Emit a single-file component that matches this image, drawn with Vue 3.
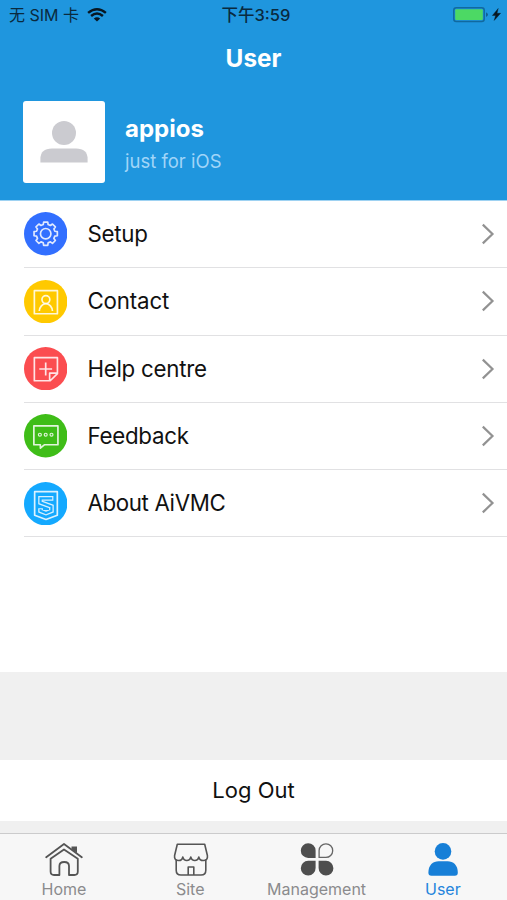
<script setup>
const items = [
  { id: 'setup', label: 'Setup', color: '#326fff' },
  { id: 'contact', label: 'Contact', color: '#ffc900' },
  { id: 'help', label: 'Help centre', color: '#fb4d50' },
  { id: 'feedback', label: 'Feedback', color: '#3fbd18' },
  { id: 'about', label: 'About AiVMC', color: '#14a9ff' },
]
const tabs = [
  { id: 'home', label: 'Home' },
  { id: 'site', label: 'Site' },
  { id: 'management', label: 'Management' },
  { id: 'user', label: 'User' },
]

// Outline of an eight-toothed gear centred at (22, 22)
const gear = (() => {
  const pts = []
  for (let i = 0; i < 8; i++) {
    for (const [offset, r] of [[-15, 9.6], [-10, 12], [10, 12], [15, 9.6]]) {
      const a = ((i * 45 + offset - 90) * Math.PI) / 180
      pts.push(`${(22 + r * Math.cos(a)).toFixed(2)} ${(22 + r * Math.sin(a)).toFixed(2)}`)
    }
  }
  return `M${pts.join('L')}Z`
})()
</script>

<template>
  <div class="screen">
    <header class="header">
      <div class="status">
        <div class="carrier">
          <span class="carrier-name">无 SIM 卡</span>
          <svg class="wifi" width="20" height="14" viewBox="0 0 20 14">
            <path d="M1.1 4.9Q10-2.3 18.9 4.9" />
            <path d="M4.1 8Q10 3 15.9 8" />
            <path class="dot" d="M6.8 10.4Q10 7.9 13.2 10.4L10 13.6Z" />
          </svg>
        </div>
        <span class="time">下午3:59</span>
        <svg class="battery" width="50" height="16" viewBox="0 0 50 16">
          <rect x=".8" y=".8" width="30.4" height="13.6" rx="2.5" fill="none" stroke="#11699f" stroke-width="1.5" />
          <rect x="2.2" y="2.2" width="27.6" height="10.8" rx="1" fill="#4cd964" />
          <path d="M33.2 5.2Q36.5 7.6 33.2 10Z" fill="#12547d" />
          <path d="M45.2 1.5L39.4 8.5H42.6L41.2 13.4L47.6 6.3H44Z" fill="#081722" stroke="#081722" stroke-width=".4" />
        </svg>
      </div>
      <h1 class="title">User</h1>
      <div class="profile">
        <div class="avatar">
          <svg width="48" height="42" viewBox="0 0 48 42" fill="#cbcbd0">
            <circle cx="24" cy="12" r="12" />
            <path d="M.4 41.5V38Q.4 27.5 12 27.5H36Q47.6 27.5 47.6 38V41.5Z" />
          </svg>
        </div>
        <div class="identity">
          <div class="name">appios</div>
          <div class="bio">just for iOS</div>
        </div>
      </div>
    </header>

    <main class="list">
      <div v-for="item in items" :key="item.id" class="row">
        <svg class="badge" viewBox="0 0 44 44">
          <circle cx="22" cy="22" r="22" :fill="item.color" />
          <g v-if="item.id === 'setup'" class="glyph">
            <path :d="gear" />
            <circle cx="22" cy="22" r="5.3" />
          </g>
          <g v-else-if="item.id === 'contact'" class="glyph">
            <rect x="10.5" y="10.8" width="23.4" height="23.4" />
            <circle cx="22.2" cy="19.8" r="4" />
            <path d="M15.5 31.4C15.9 27.5 18.5 24 22.2 24S28.5 27.5 28.9 31.4" />
          </g>
          <g v-else-if="item.id === 'help'" class="glyph">
            <path d="M33.9 26.5V10.8H10.5V34.2H26.6L33.9 27V26.5H26V34.2M22 15.8V28.8M15.5 22.3H28.5" />
          </g>
          <g v-else-if="item.id === 'feedback'" class="glyph">
            <path d="M10 12H34.4V31.2H20.6L16.6 34.6V31.2H10Z" />
            <circle class="small" cx="16.1" cy="21" r="1.5" />
            <circle class="small" cx="22" cy="21" r="1.5" />
            <circle class="small" cx="27.9" cy="21" r="1.5" />
          </g>
          <g v-else class="glyph">
            <path d="M10.8 9.8H33.8V33.8L22.3 38L10.8 33.8Z" />
            <path class="ribbon" d="M29.8 16.6H16.8V20.8L27.8 24.8V29.2L22.3 31.4L16.8 29.2V26.6" />
            <path class="ribbon-core" d="M28.6 16.6H16.8V20.8L27.8 24.8V29.2L22.3 31.4L16.8 29.2V27.6" />
          </g>
        </svg>
        <div class="label" :class="item.id">{{ item.label }}</div>
        <svg class="chevron" width="14" height="22" viewBox="0 0 14 22">
          <path d="M1.8 1.6L11.5 11L1.8 20.4" />
        </svg>
      </div>
    </main>

    <section class="footer">
      <button class="logout">Log Out</button>
    </section>

    <nav class="tabs">
      <div v-for="tab in tabs" :key="tab.id" class="tab" :class="{ active: tab.id === 'user' }">
        <svg v-if="tab.id === 'home'" class="tab-icon line" width="38" height="36" viewBox="0 0 38 36">
          <path d="M1.2 15.2L19 2L36.8 15.2" />
          <path d="M5.6 16.8L19 7.5L32.8 16.8V29.5Q32.8 33 29.3 33H24V24Q24 20 19.2 20T14.4 24V33H9Q5.6 33 5.6 29.5Z" />
          <path d="M26.5 4.6H32V11L26.5 7.2Z" fill="#555" stroke="none" />
        </svg>
        <svg v-else-if="tab.id === 'site'" class="tab-icon line thin" width="38" height="36" viewBox="0 0 38 36">
          <path d="M5.3 2.2H32.7L35.4 13.5Q36.1 18.5 31.2 18.5Q27.4 18.5 26.8 15Q26 18.5 22.8 18.5T18.8 15Q18 18.5 14.8 18.5T10.8 15Q10.2 18.5 6.8 18.5Q1.9 18.5 2.6 13.5Z" />
          <path d="M4.2 18.3V28.2Q4.2 33 9 33H29Q33.8 33 33.8 28.2V18.3M16.2 33V25H21.8V33" />
        </svg>
        <svg v-else-if="tab.id === 'management'" class="tab-icon" width="38" height="36" viewBox="0 0 38 36" fill="#4e4e4e">
          <path d="M17.6 16V8.5A7.4 7.4 0 1 0 10.2 16Z" />
          <path d="M17.6 18.8V26.1A7.4 7.4 0 1 1 10.2 18.8Z" />
          <path d="M20.6 18.8H28A7.4 7.4 0 1 1 20.6 26.1Z" />
          <path d="M21.1 15.4V8.5A6.8 6.8 0 1 1 27.9 15.4Z" fill="none" stroke="#666" stroke-width="1.3" />
        </svg>
        <svg v-else class="tab-icon" width="38" height="36" viewBox="0 0 38 36" fill="#177fd7">
          <circle cx="19" cy="9.4" r="8.3" />
          <path d="M4.4 30.5C4.4 23.2 9 19.3 14.6 19.3H23.6C29.2 19.3 33.8 23.2 33.8 30.5Q33.8 33.7 30.8 33.7H7.4Q4.4 33.7 4.4 30.5Z" />
        </svg>
        <span class="tab-label">{{ tab.label }}</span>
      </div>
    </nav>
  </div>
</template>

<style>
body {
  margin: 0;
}
</style>

<style scoped>
.screen {
  width: 507px;
  height: 900px;
  display: flex;
  flex-direction: column;
  background: #fff;
  color: #111;
  font-family: Inter, "Noto Sans CJK SC", sans-serif;
  overflow: hidden;
}
.header {
  box-sizing: border-box;
  height: 201px;
  flex: none;
  border-bottom: 1px solid #9ed2f2;
  background: #1f96de;
  color: #fff;
}
.status {
  height: 30px;
  display: grid;
  grid-template-columns: 1fr auto 1fr;
  align-items: center;
  padding: 0 4px 0 9px;
  color: #0a2a3e;
}
.carrier {
  display: flex;
  align-items: center;
  gap: 8px;
}
.carrier-name {
  font-size: 16px;
  line-height: 30px;
}
.wifi {
  fill: none;
  stroke: #081722;
  stroke-width: 2.5;
}
.wifi .dot {
  fill: #081722;
  stroke: none;
}
.time {
  font-size: 16.5px;
  font-weight: 500;
  line-height: 30px;
}
.battery {
  justify-self: end;
}
.title {
  margin: 0;
  height: 56px;
  line-height: 56px;
  text-align: center;
  font-size: 24.3px;
  font-weight: 700;
}
.profile {
  display: flex;
  padding: 15px 23px 0;
  gap: 20px;
}
.avatar {
  box-sizing: border-box;
  width: 82px;
  height: 82px;
  padding: 20px 17px 0;
  border-radius: 3px;
  background: #fff;
}
.avatar svg {
  display: block;
}
.identity {
  padding-top: 12px;
}
.name {
  height: 32px;
  line-height: 32px;
  font-size: 24px;
  font-weight: 700;
}
.bio {
  height: 32px;
  line-height: 33px;
  font-size: 18.5px;
  color: #a1d5f8;
}
.list {
  box-sizing: border-box;
  height: 471px;
  flex: none;
  padding-left: 24px;
}
.row {
  box-sizing: border-box;
  height: 67.3px;
  display: flex;
  align-items: center;
  border-bottom: 1px solid #e1e1e3;
  padding-right: 12px;
}
.badge {
  width: 43.4px;
  height: 43.4px;
  margin-right: 20px;
}
.glyph {
  fill: none;
  stroke: #fff;
  stroke-opacity: 0.85;
  stroke-width: 1.7;
  stroke-linejoin: round;
}
.glyph .small {
  stroke-width: 1.2;
}
.glyph .ribbon {
  stroke: #d6efff;
  stroke-opacity: 1;
  stroke-width: 4.8;
  stroke-linejoin: miter;
}
.glyph .ribbon-core {
  stroke: #14a9ff;
  stroke-opacity: 1;
  stroke-width: 2.2;
  stroke-linejoin: miter;
}
.label {
  flex: 1;
  font-size: 22.3px;
  line-height: 30px;
  letter-spacing: -0.25px;
}
.label.contact {
  letter-spacing: -0.15px;
}
.label.about {
  letter-spacing: -0.35px;
}
.chevron {
  fill: none;
  stroke: #929292;
  stroke-width: 2.2;
}
.footer {
  box-sizing: border-box;
  height: 161px;
  flex: none;
  padding-top: 88px;
  background: #f0f0f0;
}
.logout {
  display: block;
  width: 100%;
  height: 61px;
  padding: 0;
  border: 0;
  background: #fff;
  color: #111;
  font: 22px/61px Inter, sans-serif;
}
.tabs {
  box-sizing: border-box;
  height: 67px;
  flex: none;
  display: flex;
  padding-left: 0.8px;
  border-top: 1px solid #cbcbcc;
  background: #f7f7f7;
}
.tab {
  box-sizing: border-box;
  width: 126.3px;
  flex: none;
  display: flex;
  flex-direction: column;
  align-items: center;
  padding-top: 8px;
  color: #8b8b8d;
}
.tab-icon {
  flex: none;
}
.tab.active {
  color: #2484dc;
}
.line {
  fill: none;
  stroke: #555;
  stroke-width: 1.8;
  stroke-linejoin: round;
  stroke-linecap: round;
}
.thin {
  stroke-width: 1.6;
  margin-left: 2px;
}
.tab-label {
  font-size: 16px;
  line-height: 22px;
}
</style>
